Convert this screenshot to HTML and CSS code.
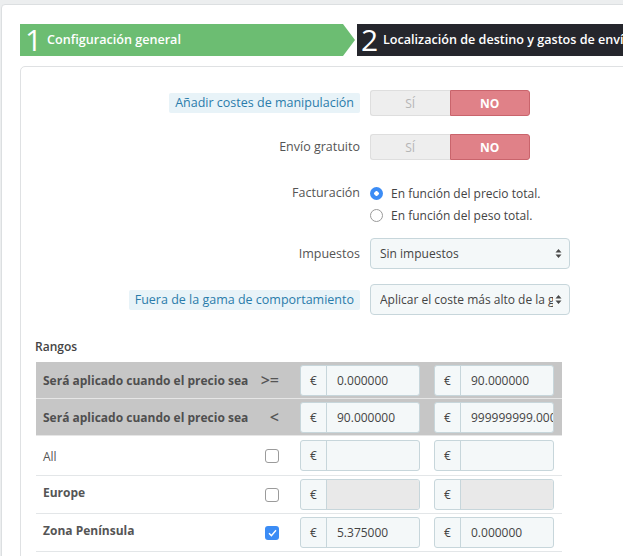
FILE: index.html
```html
<!DOCTYPE html>
<html lang="es">
<head>
<meta charset="utf-8">
<title>Transportista</title>
<link rel="stylesheet" href="styles.css">
</head>
<body>
<div class="page">
  <div class="steps">
    <div class="step step-done"><span class="num">1</span><span class="txt">Configuración general</span></div>
    <div class="step step-current"><span class="num">2</span><span class="txt">Localización de destino y gastos de envío</span></div>
  </div>

  <div class="panel">
    <div class="form">
      <div class="row r-handling">
        <div class="lbl"><span class="tip">Añadir costes de manipulación</span></div>
        <div class="ctl">
          <div class="switch"><span class="sw-yes">SÍ</span><span class="sw-no">NO</span></div>
        </div>
      </div>
      <div class="row r-free">
        <div class="lbl">Envío gratuito</div>
        <div class="ctl">
          <div class="switch"><span class="sw-yes">SÍ</span><span class="sw-no">NO</span></div>
        </div>
      </div>
      <div class="row r-billing">
        <div class="lbl">Facturación</div>
        <div class="ctl">
          <div class="radio"><span class="rb rb-on"></span><span>En función del precio total.</span></div>
          <div class="radio"><span class="rb"></span><span>En función del peso total.</span></div>
        </div>
      </div>
      <div class="row r-tax">
        <div class="lbl">Impuestos</div>
        <div class="ctl">
          <div class="select"><span class="sel-text">Sin impuestos</span>
            <svg class="sel-arrow" width="7" height="11" viewBox="0 0 7 11"><path d="M3.5 1 L6.5 4.5 L0.5 4.5 Z M3.5 10 L6.5 6.5 L0.5 6.5 Z" fill="#4a4a4a"/></svg>
          </div>
        </div>
      </div>
      <div class="row r-range">
        <div class="lbl"><span class="tip">Fuera de la gama de comportamiento</span></div>
        <div class="ctl">
          <div class="select"><span class="sel-text">Aplicar el coste más alto de la gama definida</span>
            <svg class="sel-arrow" width="7" height="11" viewBox="0 0 7 11"><path d="M3.5 1 L6.5 4.5 L0.5 4.5 Z M3.5 10 L6.5 6.5 L0.5 6.5 Z" fill="#4a4a4a"/></svg>
          </div>
        </div>
      </div>
    </div>

    <div class="ranges-title">Rangos</div>

    <div class="ranges">
      <div class="tr tr-head">
        <div class="c-label">Será aplicado cuando el precio sea</div>
        <div class="c-op">&gt;=</div>
        <div class="igroup c-in1"><span class="addon">€</span><span class="ival">0.000000</span></div>
        <div class="igroup c-in2"><span class="addon">€</span><span class="ival">90.000000</span></div>
      </div>
      <div class="tr tr-head">
        <div class="c-label">Será aplicado cuando el precio sea</div>
        <div class="c-op">&lt;</div>
        <div class="igroup c-in1"><span class="addon">€</span><span class="ival">90.000000</span></div>
        <div class="igroup c-in2"><span class="addon">€</span><span class="ival">999999999.000000</span></div>
      </div>
      <div class="tr tr-all">
        <div class="c-label c-plain">All</div>
        <div class="c-op"><span class="cb"></span></div>
        <div class="igroup c-in1"><span class="addon">€</span><span class="ival"></span></div>
        <div class="igroup c-in2"><span class="addon">€</span><span class="ival"></span></div>
      </div>
      <div class="tr tr-zone">
        <div class="c-label">Europe</div>
        <div class="c-op"><span class="cb"></span></div>
        <div class="igroup c-in1 disabled"><span class="addon">€</span><span class="ival"></span></div>
        <div class="igroup c-in2 disabled"><span class="addon">€</span><span class="ival"></span></div>
      </div>
      <div class="tr tr-zone">
        <div class="c-label">Zona Península</div>
        <div class="c-op"><span class="cb cb-on"><svg width="9" height="8" viewBox="0 0 9 8"><path d="M1 4.2 L3.4 6.6 L8 1.2" fill="none" stroke="#fff" stroke-width="1.4"/></svg></span></div>
        <div class="igroup c-in1"><span class="addon">€</span><span class="ival">5.375000</span></div>
        <div class="igroup c-in2"><span class="addon">€</span><span class="ival">0.000000</span></div>
      </div>
    </div>
  </div>
</div>
</body>
</html>
```

FILE: styles.css
```css
html, body {
  margin: 0;
  padding: 0;
  overflow: hidden;
  height: 100%;
}
body {
  background: #eceeef;
  font-family: "Open Sans", "Liberation Sans", sans-serif;
  font-size: 12px;
  color: #555;
  padding: 4px 0 0 1px;
  box-sizing: border-box;
}
.page {
  width: 720px;
  min-height: 600px;
  background: #fff;
  border: 1px solid #dcdfe1;
  border-radius: 4px;
  padding: 19px 0 0 18px;
  box-sizing: border-box;
}

/* steps */
.steps {
  display: flex;
  height: 32px;
  gap: 2px;
}
.step {
  display: flex;
  align-items: center;
  color: #fff;
  height: 32px;
  white-space: nowrap;
  overflow: hidden;
}
.step-done {
  width: 335px;
  background: #6cbd72;
  clip-path: polygon(0 0, calc(100% - 12px) 0, 100% 50%, calc(100% - 12px) 100%, 0 100%);
  padding-left: 3px;
  box-sizing: border-box;
}
.step-current {
  width: 320px;
  background: #25262c;
  padding-left: 2px;
}
.num {
  font-size: 30px;
  font-weight: 400;
  line-height: 32px;
  width: 21px;
  text-align: center;
  margin-right: 3px;
}
.txt {
  font-size: 12.6px;
  font-weight: 600;
  line-height: 32px;
}

/* panel */
.panel {
  margin-top: 10px;
  width: 700px;
  border: 1px solid #dfe1e3;
  border-radius: 5px;
  padding: 23px 0 40px 0;
}
.form {
  display: flex;
  flex-direction: column;
}
.row {
  display: grid;
  grid-template-columns: 339px 200px;
  column-gap: 10px;
  align-items: center;
}
.r-free { margin-top: 18px; }
.r-billing { margin-top: 22px; align-items: start; }
.r-tax { margin-top: 12px; }
.r-range { margin-top: 15px; }

.lbl {
  text-align: right;
  line-height: 20px;
  color: #555;
  font-size: 12.5px;
}
.r-billing .lbl { line-height: 22px; }
.tip {
  display: inline-block;
  background: #e8f3f8;
  color: #2a7cab;
  padding: 0 6px;
  line-height: 20px;
  border-radius: 2px;
}

.switch {
  display: flex;
  width: 160px;
  height: 26px;
  box-sizing: border-box;
}
.switch span {
  flex: 1;
  display: flex;
  align-items: center;
  justify-content: center;
  font-size: 12px;
}
.sw-yes {
  background: #eeeeee;
  color: #b5b5b5;
  border: 1px solid #dedede;
  border-right: none;
  border-radius: 3px 0 0 3px;
}
.sw-no {
  background: #e08188;
  color: #fff;
  font-weight: 700;
  border: 1px solid #c9646c;
  border-radius: 0 3px 3px 0;
}

.radio {
  display: flex;
  align-items: center;
  height: 22px;
  gap: 8px;
  font-size: 12px;
  color: #444;
}
.rb {
  width: 13px;
  height: 13px;
  border: 1px solid #9a9a9a;
  border-radius: 50%;
  box-sizing: border-box;
  background: #fff;
  flex: none;
}
.rb-on {
  border: none;
  background: radial-gradient(circle, #fff 0 2px, #3b8cf5 2.5px);
}

.select {
  display: flex;
  align-items: center;
  height: 31px;
  width: 200px;
  box-sizing: border-box;
  border: 1px solid #c7d6db;
  border-radius: 4px;
  background: #f4f8f9;
  padding: 0 7px 0 9px;
  color: #444;
}
.sel-text {
  flex: 1;
  white-space: nowrap;
  overflow: hidden;
  font-size: 12px;
}
.sel-arrow {
  flex: none;
  margin-left: 2px;
}

.ranges-title {
  margin: 23px 0 6px 14px;
  font-weight: 600;
  font-size: 12px;
  color: #444;
  line-height: 18px;
}
.ranges {
  margin-left: 15px;
  width: 526px;
}
.tr {
  display: flex;
  align-items: center;
  border-bottom: 1px solid #e3e6e8;
}
.tr-head {
  background: #c6c6c6;
  height: 36px;
  border-bottom: 1px solid #e6e6e6;
}
.tr-head:first-child { margin-top: 1px; }
.tr-all { height: 39px; }
.tr-zone { height: 37px; }
.c-label {
  width: 215px;
  padding-left: 7px;
  font-weight: 700;
  color: #555;
  font-size: 12px;
  white-space: nowrap;
}
.tr-head .c-label { color: #4f4f4f; }
.tr-all .c-label { padding-top: 2px; }
.tr-zone .c-label {
  align-self: flex-start;
  padding-top: 8px;
}
.c-plain { font-weight: 400; }
.c-op {
  width: 21px;
  display: flex;
  justify-content: flex-end;
  font-size: 16px;
  font-weight: 600;
  color: #555;
}
.cb {
  width: 14px;
  height: 14px;
  border: 1px solid #9b9b9b;
  border-radius: 3px;
  box-sizing: border-box;
  background: #fff;
  display: flex;
  align-items: center;
  justify-content: center;
}
.cb-on {
  border: none;
  background: #3b8cf5;
}
.igroup {
  display: flex;
  width: 120px;
  height: 31px;
  box-sizing: border-box;
  border: 1px solid #c7d6db;
  border-radius: 3px;
  background: #f4f8f9;
  overflow: hidden;
}
.c-in1 { margin-left: 21px; }
.c-in2 { margin-left: 14px; }
.addon {
  width: 25px;
  flex: none;
  display: flex;
  align-items: center;
  justify-content: center;
  border-right: 1px solid #c7d6db;
  color: #444;
  font-size: 12px;
}
.ival {
  flex: 1;
  display: flex;
  align-items: center;
  padding-left: 10px;
  white-space: nowrap;
  overflow: hidden;
  color: #444;
  font-size: 12px;
}
.disabled .ival { background: #e9e9e9; }
```
